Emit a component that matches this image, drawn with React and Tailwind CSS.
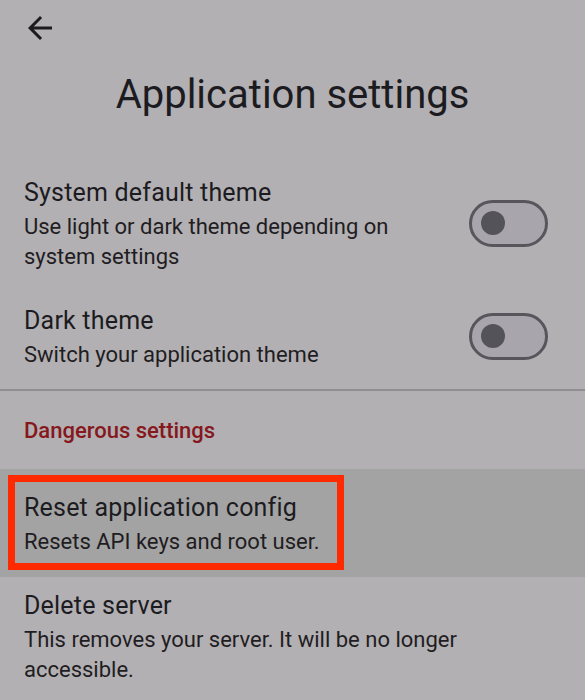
import React from 'react';

const Toggle = () => (
  <div className="w-[79px] h-[47px] rounded-full border-[3px] border-[#58565c] bg-[#a8a6ac] flex items-center pl-[9px] shrink-0">
    <div className="w-[24px] h-[24px] rounded-full bg-[#55535a]" />
  </div>
);

const SettingRow = ({ title, subtitle, toggle, className = '' }) => (
  <div className={`flex items-center pl-[24px] pr-[37px] ${className}`}>
    <div className={toggle ? 'flex-1 pr-[24px]' : 'flex-1'}>
      <div className="text-[25px] leading-[38px] tracking-[0.2px] text-[#1c1b1f]">{title}</div>
      <div className="text-[22px] leading-[30px] text-[#1f1d22]">{subtitle}</div>
    </div>
    {toggle && <Toggle />}
  </div>
);

export default function App() {
  return (
    <div className="w-[585px] h-[700px] overflow-hidden bg-[#b2b0b3] font-['Roboto',sans-serif]">
      <div className="h-[56px] pl-[22px] pt-[10px]">
        <svg width="36" height="36" viewBox="0 0 24 24" fill="#1c1b1f">
          <path d="M20 11H7.83l5.59-5.59L12 4l-8 8 8 8 1.41-1.41L7.83 13H20v-2z" />
        </svg>
      </div>
      <h1 className="mt-[15px] text-center text-[40px] leading-[48px] text-[#1c1b1f]">Application settings</h1>

      <SettingRow
        className="mt-[40px] py-[15px]"
        title="System default theme"
        subtitle="Use light or dark theme depending on system settings"
        toggle
      />
      <SettingRow
        className="py-[15px]"
        title="Dark theme"
        subtitle="Switch your application theme"
        toggle
      />
      <div className="mt-[4px] h-[2px] bg-[#908e92]" />

      <div className="mt-[25px] pl-[24px] text-[22px] leading-[30px] font-medium text-[#86171d]">Dangerous settings</div>

      <div className="relative mt-[23px] bg-[#a3a3a3]">
        <SettingRow
          className="pt-[20px] pb-[20px]"
          title="Reset application config"
          subtitle="Resets API keys and root user."
        />
        <div className="absolute left-[8px] top-[6px] w-[336px] h-[95px] border-[7px] border-[#ff2a00]" />
      </div>

      <SettingRow
        className="pt-[10px]"
        title="Delete server"
        subtitle="This removes your server. It will be no longer accessible."
      />
    </div>
  );
}
